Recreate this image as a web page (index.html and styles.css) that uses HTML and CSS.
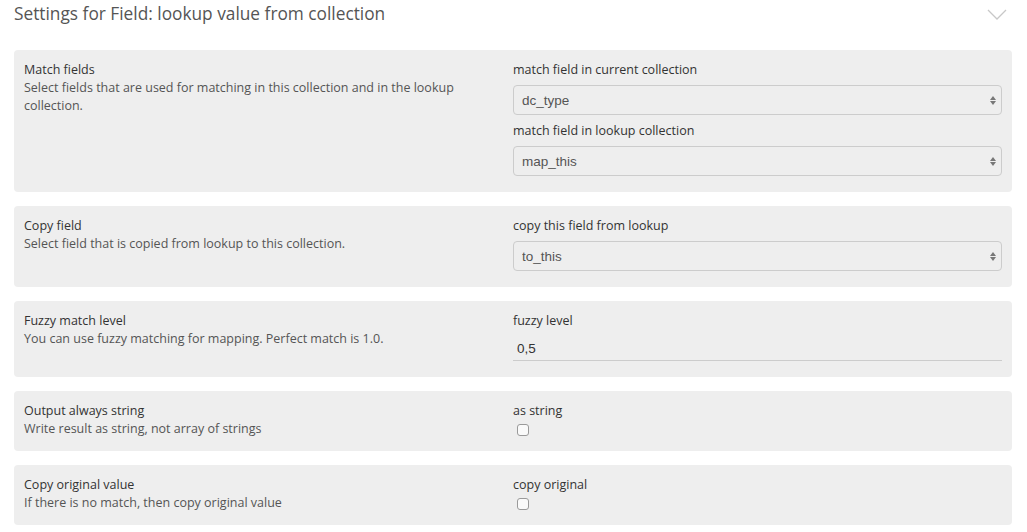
FILE: index.html
```html
<!DOCTYPE html>
<html lang="en">
<head>
<meta charset="utf-8">
<title>Settings for Field</title>
<link rel="stylesheet" href="styles.css">
</head>
<body>
<div class="page">
  <div class="header">
    <h1 class="title">Settings for Field: lookup value from collection</h1>
    <svg class="chevron" width="20" height="11" viewBox="0 0 20 11"><path d="M1 1 L10 10 L19 1" fill="none" stroke="#c8c8c8" stroke-width="1.3"/></svg>
  </div>

  <div class="card">
    <div class="info">
      <div class="info-title">Match fields</div>
      <div class="info-desc">Select fields that are used for matching in this collection and in the lookup collection.</div>
    </div>
    <div class="controls">
      <div class="group">
        <label class="ctl-label">match field in current collection</label>
        <div class="select-wrap"><select class="select"><option>dc_type</option></select></div>
      </div>
      <div class="group">
        <label class="ctl-label">match field in lookup collection</label>
        <div class="select-wrap"><select class="select"><option>map_this</option></select></div>
      </div>
    </div>
  </div>

  <div class="card">
    <div class="info">
      <div class="info-title">Copy field</div>
      <div class="info-desc">Select field that is copied from lookup to this collection.</div>
    </div>
    <div class="controls">
      <div class="group">
        <label class="ctl-label">copy this field from lookup</label>
        <div class="select-wrap"><select class="select"><option>to_this</option></select></div>
      </div>
    </div>
  </div>

  <div class="card">
    <div class="info">
      <div class="info-title">Fuzzy match level</div>
      <div class="info-desc">You can use fuzzy matching for mapping. Perfect match is 1.0.</div>
    </div>
    <div class="controls">
      <div class="group">
        <label class="ctl-label">fuzzy level</label>
        <input class="text-input" type="text" value="0,5">
      </div>
    </div>
  </div>

  <div class="card">
    <div class="info">
      <div class="info-title">Output always string</div>
      <div class="info-desc">Write result as string, not array of strings</div>
    </div>
    <div class="controls">
      <div class="check-group">
        <label class="ctl-label">as string</label>
        <input class="check" type="checkbox">
      </div>
    </div>
  </div>

  <div class="card">
    <div class="info">
      <div class="info-title">Copy original value</div>
      <div class="info-desc">If there is no match, then copy original value</div>
    </div>
    <div class="controls">
      <div class="check-group">
        <label class="ctl-label">copy original</label>
        <input class="check" type="checkbox">
      </div>
    </div>
  </div>
</div>
</body>
</html>
```

FILE: styles.css
```css
* { box-sizing: border-box; }
html, body { margin: 0; padding: 0; background: #fff; }
body {
  font-family: "Open Sans", "Liberation Sans", sans-serif;
  font-size: 12.5px;
  line-height: 18px;
  color: #333;
}
.page { padding: 0 15px 0 14px; }
.header {
  height: 36px;
  margin-bottom: 14px;
  display: flex;
  justify-content: space-between;
  align-items: flex-start;
  padding-right: 5px;
}
.title {
  margin: 0;
  font-weight: 400;
  font-size: 17.3px;
  line-height: 28px;
  color: #555;
}
.chevron { margin-top: 9px; }
.card {
  background: #eee;
  border-radius: 4px;
  padding: 10px;
  margin-bottom: 14px;
  display: grid;
  grid-template-columns: 1fr 1fr;
}
.info { padding: 1px 15px 0 0; }
.info-title { color: #333; }
.info-desc { color: #555; }
.group { margin-bottom: 6px; display: flex; flex-direction: column; }
.ctl-label { display: block; padding-top: 1px; color: #333; }
.select-wrap { position: relative; margin-top: 6px; }
.select {
  display: block;
  width: 100%;
  height: 30px;
  -webkit-appearance: none;
  appearance: none;
  background: transparent;
  border: 1px solid #ccc;
  border-radius: 4px;
  padding: 0 20px 0 8px;
  font-family: "Liberation Sans", Arial, sans-serif;
  font-size: 13.5px;
  color: #555;
  outline: none;
}
.select-wrap::before, .select-wrap::after {
  content: "";
  position: absolute;
  right: 6px;
  width: 0; height: 0;
  border-left: 3.5px solid transparent;
  border-right: 3.5px solid transparent;
  pointer-events: none;
}
.select-wrap::before { top: 11px; border-bottom: 4px solid #777; }
.select-wrap::after { top: 16px; border-top: 4px solid #777; }
.text-input {
  display: block;
  width: 100%;
  height: 25px;
  margin-top: 6px;
  border: none;
  border-bottom: 1px solid #ccc;
  background: transparent;
  padding: 0 4px;
  font-family: "Liberation Sans", Arial, sans-serif;
  font-size: 13.5px;
  color: #333;
  outline: none;
}
.check-group { display: flex; flex-direction: column; align-items: flex-start; }
.check {
  -webkit-appearance: none;
  appearance: none;
  display: block;
  width: 12px;
  height: 12px;
  margin: 4px 0 5px 4px;
  border: 1px solid #9a9a9a;
  border-radius: 3px;
  background: #fafafa;
}
```
